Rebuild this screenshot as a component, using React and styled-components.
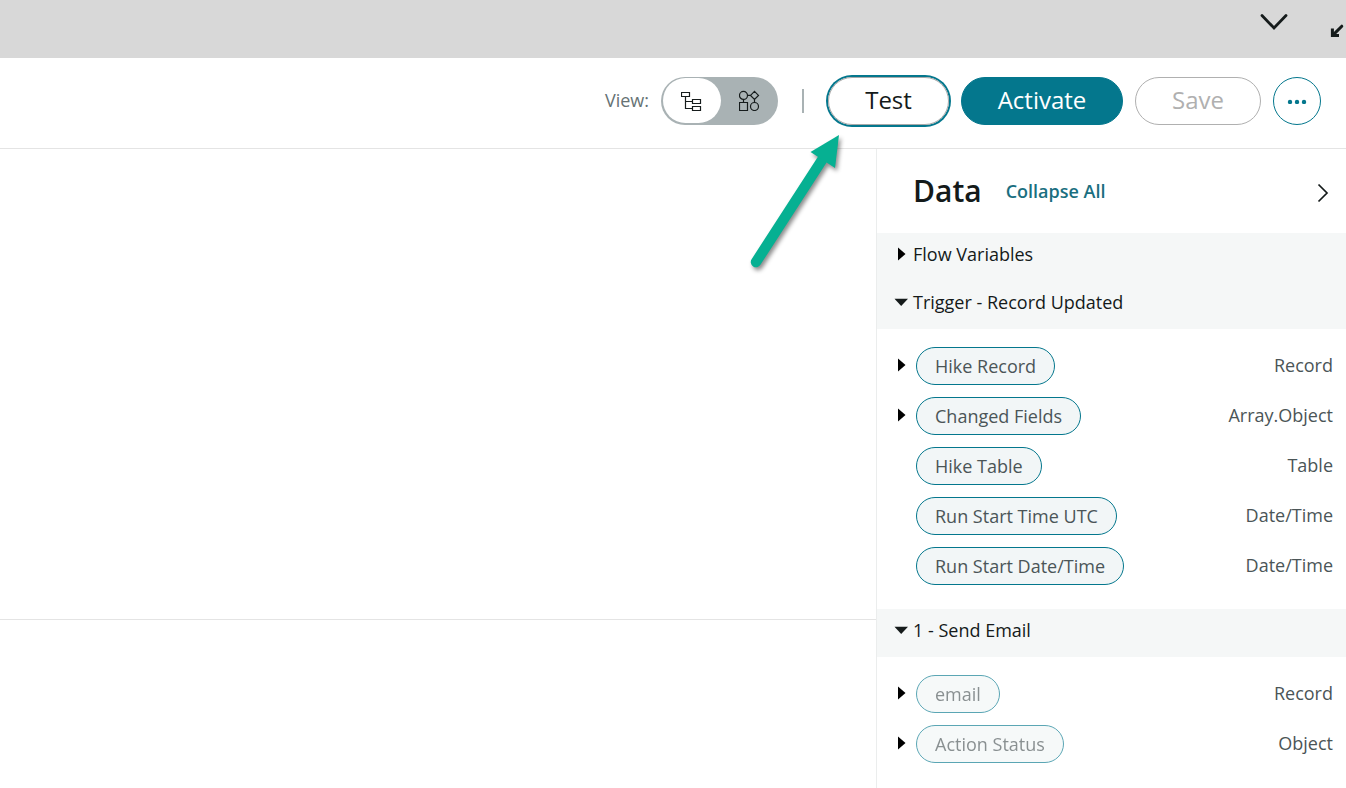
import React from "react";
import styled, { createGlobalStyle, css } from "styled-components";

const GlobalStyle = createGlobalStyle`
  *, *::before, *::after { box-sizing: border-box; }
  html, body { margin: 0; padding: 0; background: #fff; overflow: hidden; }
  button { font: inherit; margin: 0; padding: 0; background: none; border: 0; letter-spacing: inherit; }
`;

const Page = styled.div`
  position: relative;
  display: flex;
  flex-direction: column;
  width: 1346px;
  height: 788px;
  overflow: hidden;
  background: #fff;
  color: #141a1a;
  font-family: "Open Sans", "Noto Sans", sans-serif;
  font-size: 18px;
`;

const TopBar = styled.header`
  flex: none;
  display: flex;
  justify-content: flex-end;
  gap: 42px;
  height: 58px;
  padding-top: 13px;
  background: #d8d8d8;
`;

const TopIcon = styled.svg`
  flex: none;
  display: block;
  fill: none;
  stroke: #151b1b;
`;

const Toolbar = styled.div`
  flex: none;
  display: flex;
  justify-content: flex-end;
  align-items: flex-start;
  height: 91px;
  padding: 19px 25px 0 0;
  border-bottom: 1px solid #e4e4e4;
`;

const ViewLabel = styled.span`
  margin-right: 12px;
  line-height: 46px;
  color: #667274;
`;

const Toggle = styled.div`
  display: flex;
  width: 117px;
  height: 48px;
  padding: 1px 0 2px 2px;
  border-radius: 24px;
  background: #a9b2b4;
`;

const ToggleOption = styled.button`
  flex: none;
  display: flex;
  align-items: center;
  justify-content: center;
  width: 58px;
  height: 45px;
  border-radius: 23px;
  background: ${(p) => (p.$active ? "#fff" : "transparent")};
`;

const ToggleIcon = styled.svg`
  display: block;
  fill: none;
  stroke: #161c1c;
  stroke-width: 1.2;
`;

const Divider = styled.span`
  width: 2px;
  height: 24px;
  margin: 12px 24px 0 24px;
  background: #a9b2b4;
`;

const buttonVariants = {
  focused: css`
    color: #141a1a;
    border: 1px solid #a9a9a9;
    box-shadow: 0 0 0 2px #04778d;
  `,
  primary: css`
    color: #fff;
    background: #04778d;
    border: 1px solid #04778d;
  `,
  disabled: css`
    color: #b0b0b0;
    border: 1px solid #b0b0b0;
  `,
};

const ActionButton = styled.button`
  width: ${(p) => p.$width}px;
  height: 48px;
  margin-right: 12px;
  padding-bottom: 2px;
  border-radius: 24px;
  font-size: 24px;
  line-height: 44px;
  text-align: center;
  ${(p) => buttonVariants[p.$variant]}
`;

const MoreButton = styled.button`
  display: flex;
  align-items: center;
  justify-content: center;
  width: 48px;
  height: 48px;
  border: 1px solid #04778d;
  border-radius: 50%;
`;

const Main = styled.div`
  flex: 1;
  display: flex;
  min-height: 0;
`;

const Canvas = styled.main`
  display: flex;
  flex-direction: column;
  width: 876px;
`;

const CanvasArea = styled.section`
  height: 471px;
  border-bottom: 1px solid #e4e4e4;
`;

const DataPanel = styled.aside`
  flex: 1;
  border-left: 1px solid #ebeded;
`;

const PanelHeader = styled.div`
  display: flex;
  align-items: center;
  height: 84px;
  padding: 0 17px 0 36px;
`;

const PanelTitle = styled.h2`
  margin: 0 24px 0 0;
  font-size: 30px;
  font-weight: 600;
  line-height: 40px;
`;

const CollapseLink = styled.button`
  color: #1a6f80;
  font-weight: 600;
  line-height: 26px;
`;

const PanelChevron = styled.svg`
  display: block;
  margin: 4px 0 0 auto;
  fill: none;
  stroke: #141a1a;
  stroke-width: 1.7;
`;

const SectionHeader = styled.div`
  display: flex;
  height: 48px;
  padding: 0 0 6px 17px;
  align-items: center;
  background: #f5f7f7;
`;

const SectionLabel = styled.span`
  line-height: 24px;
`;

const Caret = styled.svg`
  flex: none;
  display: block;
  width: ${(p) => p.$width}px;
  height: 16px;
  fill: ${(p) => (p.$open ? "#151b1b" : "#000")};
`;

const FieldList = styled.div`
  display: flex;
  flex-direction: column;
  gap: 12px;
  padding: 18px 13px 24px 17px;
`;

const FieldRow = styled.div`
  display: flex;
  align-items: flex-start;
  height: 38px;
  line-height: 36px;

  > svg {
    margin-top: 10px;
  }
`;

const Spacer = styled.span`
  flex: none;
  width: 22px;
`;

const FieldPill = styled.span`
  height: 38px;
  padding: 0 18px;
  border: 1px solid #04778d;
  border-radius: 19px;
  background: #f2f6f7;
  color: #4b5557;
  line-height: 37px;
  opacity: ${(p) => (p.$muted ? 0.65 : 1)};
`;

const FieldType = styled.span`
  margin-left: auto;
  color: #4b5557;
`;

const PointerArrow = styled.svg`
  position: absolute;
  left: 730px;
  top: 120px;
  filter: drop-shadow(2px 3px 2px rgba(0, 0, 0, 0.45));
`;

function CaretIcon({ open, width }) {
  return (
    <Caret $open={open} $width={width} viewBox={`0 0 ${width} 16`}>
      <path d={open ? "M0.5 4.7H14L7.2 12z" : "M4 1.5V14.5L11.5 8z"} />
    </Caret>
  );
}

const sections = [
  { title: "Flow Variables", open: false, fields: [] },
  {
    title: "Trigger - Record Updated",
    open: true,
    fields: [
      { name: "Hike Record", type: "Record", expandable: true },
      { name: "Changed Fields", type: "Array.Object", expandable: true },
      { name: "Hike Table", type: "Table" },
      { name: "Run Start Time UTC", type: "Date/Time" },
      { name: "Run Start Date/Time", type: "Date/Time" },
    ],
  },
  {
    title: "1 - Send Email",
    open: true,
    fields: [
      { name: "email", type: "Record", expandable: true, muted: true },
      { name: "Action Status", type: "Object", expandable: true, muted: true },
    ],
  },
];

function Section({ title, open, fields }) {
  return (
    <>
      <SectionHeader>
        <CaretIcon open={open} width={19} />
        <SectionLabel>{title}</SectionLabel>
      </SectionHeader>
      {open && (
        <FieldList>
          {fields.map((f) => (
            <FieldRow key={f.name}>
              {f.expandable ? <CaretIcon width={22} /> : <Spacer />}
              <FieldPill $muted={f.muted}>{f.name}</FieldPill>
              <FieldType>{f.type}</FieldType>
            </FieldRow>
          ))}
        </FieldList>
      )}
    </>
  );
}

export default function App() {
  return (
    <>
      <GlobalStyle />
      <Page>
        <TopBar>
          <TopIcon width="28" height="18" viewBox="0 0 28 18" strokeWidth="2.8" strokeLinecap="round">
            <path d="M2 2.5L14 15L26 2.5" />
          </TopIcon>
          <TopIcon width="16" height="26" viewBox="0 0 16 26" strokeWidth="3">
            <path d="M11.8 13.2L3.4 21.6" strokeLinecap="round" />
            <path d="M2.4 15.5V22.4H9" />
          </TopIcon>
        </TopBar>
        <Toolbar>
          <ViewLabel>View:</ViewLabel>
          <Toggle>
            <ToggleOption $active aria-label="Tree view">
              <ToggleIcon width="22" height="21" viewBox="0 0 22 21">
                <path d="M0.5 2.5h8v4h-8zM11.5 9.5h8v4h-8zM11.5 16.5h8v4h-8zM4.5 6.5v12h7M4.5 11.5h7" />
              </ToggleIcon>
            </ToggleOption>
            <ToggleOption aria-label="Diagram view">
              <ToggleIcon width="22" height="21" viewBox="0 0 22 21">
                <circle cx="4.5" cy="5.4" r="4" />
                <path d="M15.5 1.4l4 4-4 4-4-4zM8.5 5.4h3M4.5 9.4v3M15.5 9.4v3M0.5 12.5h8v8h-8z" />
                <circle cx="15.5" cy="16.5" r="4" />
              </ToggleIcon>
            </ToggleOption>
          </Toggle>
          <Divider />
          <ActionButton $variant="focused" $width={121}>Test</ActionButton>
          <ActionButton $variant="primary" $width={162}>Activate</ActionButton>
          <ActionButton $variant="disabled" $width={126}>Save</ActionButton>
          <MoreButton aria-label="More">
            <svg width="20" height="6" viewBox="0 0 20 6" fill="#04778d">
              <circle cx="3" cy="4" r="2.2" />
              <circle cx="10" cy="4" r="2.2" />
              <circle cx="17" cy="4" r="2.2" />
            </svg>
          </MoreButton>
        </Toolbar>
        <Main>
          <Canvas>
            <CanvasArea />
          </Canvas>
          <DataPanel>
            <PanelHeader>
              <PanelTitle>Data</PanelTitle>
              <CollapseLink>Collapse All</CollapseLink>
              <PanelChevron width="12" height="20" viewBox="0 0 12 20">
                <path d="M1.5 1.5L10 10L1.5 18.5" />
              </PanelChevron>
            </PanelHeader>
            {sections.map((s) => (
              <Section key={s.title} {...s} />
            ))}
          </DataPanel>
        </Main>
        <PointerArrow width="130" height="165" viewBox="0 0 130 165" fill="#06b092">
          <path d="M26 142L92 40" stroke="#06b092" strokeWidth="10.5" strokeLinecap="round" />
          <path d="M109 15L80.5 32L105 48z" />
        </PointerArrow>
      </Page>
    </>
  );
}
